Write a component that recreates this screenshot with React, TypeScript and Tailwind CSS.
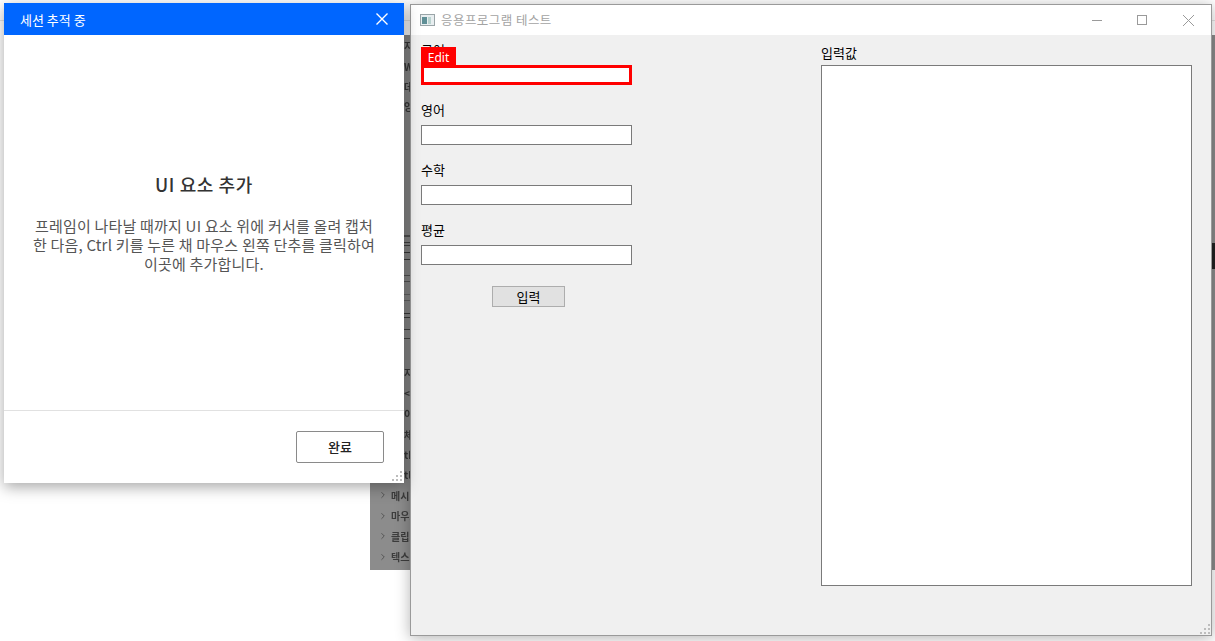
import React from 'react';
import { ChevronRight } from 'lucide-react';

const KR = 'font-["Noto_Sans_CJK_KR","Noto_Sans",sans-serif]';

// 뒤쪽 창의 트리 항목 (어둡게 가려진 부분)
const behindRows = ['메시지', '마우스', '클립보드', '텍스트'];

const behindStubs: [number, string][] = [
  [46, '지'],
  [67, 'W'],
  [87, '데'],
  [107, '앙'],
  [373, '지'],
  [393, '<'],
  [414, '이'],
  [435, '체'],
  [455, 'th'],
  [475, 'tle'],
];

// 가려진 아이콘 조각들: [top, height, 진하기]
const behindBars: [number, number, string][] = [
  [235, 1, 'border-[#555]'],
  [242, 4, 'border-[#444]'],
  [252, 8, 'border-[#3a3a3a]'],
  [275, 7, 'border-[#555]'],
  [294, 7, 'border-[#666]'],
  [313, 5, 'border-[#3a3a3a]'],
  [329, 10, 'border-[#444]'],
];

const Field = ({ label }: { label: string }) => (
  <div className="flex flex-col h-[60px]">
    <div className="h-[25px] pt-[1px] text-[13px] leading-[18px] text-black">{label}</div>
    <div className="w-[211px] h-[20px] bg-white border border-[#7a7a7a]" />
  </div>
);

const Grip = ({ className }: { className: string }) => (
  <svg className={className} width="12" height="12" viewBox="0 0 12 12" fill="#bdbdbd">
    <rect x="8" y="0" width="2" height="2" />
    <rect x="4" y="4" width="2" height="2" />
    <rect x="8" y="4" width="2" height="2" />
    <rect x="0" y="8" width="2" height="2" />
    <rect x="4" y="8" width="2" height="2" />
    <rect x="8" y="8" width="2" height="2" />
  </svg>
);

const TrackingDialog = () => (
  <div className={`absolute left-[4px] top-[3px] w-[400px] h-[480px] bg-white flex flex-col shadow-[0_4px_14px_rgba(0,0,0,0.35)] ${KR}`}>
    <div className="h-[32px] shrink-0 bg-[#0066ff] flex items-center justify-between pl-[16px] pr-[16px] text-white">
      <span className="text-[13px] leading-none">세션 추적 중</span>
      <svg width="12" height="12" viewBox="0 0 12 12" stroke="currentColor" strokeWidth="1.4" fill="none">
        <path d="M0.5 0.5l11 11M11.5 0.5l-11 11" />
      </svg>
    </div>
    <div className="flex-1 flex flex-col items-center pt-[135px] px-[20px] text-center">
      <h2 className="text-[18px] leading-[28px] font-medium tracking-[0.6px] text-[#333] whitespace-nowrap">UI 요소 추가</h2>
      <p className="mt-[18px] text-[15px] leading-[19px] tracking-[0.2px] text-[#555] whitespace-nowrap">
        프레임이 나타날 때까지 UI 요소 위에 커서를 올려 캡처
        <br />
        한 다음, Ctrl 키를 누른 채 마우스 왼쪽 단추를 클릭하여
        <br />
        이곳에 추가합니다.
      </p>
    </div>
    <div className="h-[73px] shrink-0 border-t border-[#e1e1e1] flex items-start justify-end pt-[20px] pr-[20px]">
      <button className="w-[88px] h-[32px] rounded-[2px] border border-[#8a8a8a] bg-white text-[13px] font-medium text-[#222]">
        완료
      </button>
    </div>
    <Grip className="absolute right-[0px] bottom-[0px]" />
  </div>
);

const TestWindow = () => (
  <div className={`absolute left-[410px] top-[4px] w-[802px] h-[632px] border border-[#9a9a9a] flex flex-col shadow-[0_2px_14px_rgba(0,0,0,0.3)] ${KR}`}>
    <div className="h-[30px] shrink-0 bg-white flex items-center pl-[9px] text-[#a3a3a3]">
      <svg width="15" height="12" viewBox="0 0 15 12" className="mr-[6px]">
        <rect x="0.5" y="0.5" width="14" height="11" fill="#e8eef0" stroke="#9aa5a8" />
        <rect x="2" y="3" width="5" height="7" fill="#5f8f96" />
        <rect x="8" y="3" width="3" height="7" fill="#b9d3cf" />
      </svg>
      <span className="text-[12.5px] leading-none tracking-[0.45px]">응용프로그램 테스트</span>
      <div className="ml-auto flex items-center h-full">
        <svg width="45" height="30" viewBox="0 0 45 30" stroke="#9a9a9a" fill="none">
          <path d="M16 15.5h10" />
        </svg>
        <svg width="45" height="30" viewBox="0 0 45 30" stroke="#9a9a9a" fill="none">
          <rect x="16.5" y="10.5" width="9" height="9" />
        </svg>
        <svg width="45" height="30" viewBox="0 0 45 30" stroke="#9a9a9a" fill="none">
          <path d="M17 10l11 11M28 10l-11 11" />
        </svg>
      </div>
    </div>
    <div className="relative flex-1 bg-[#f0f0f0] pl-[10px] pr-[19px] pt-[5px] flex justify-between">
      <div className="flex flex-col w-[211px]">
        <Field label="국어" />
        <Field label="영어" />
        <Field label="수학" />
        <Field label="평균" />
        <button className="self-start ml-[71px] mt-[6px] w-[73px] h-[21px] bg-[#e1e1e1] border border-[#adadad] text-[13px] leading-none text-black">
          입력
        </button>
      </div>
      <div className="flex flex-col w-[371px]">
        <div className="h-[25px] pt-[4px] text-[13px] leading-[18px] text-black">입력값</div>
        <div className="w-[371px] h-[521px] bg-white border border-[#7a7a7a]" />
      </div>
      <Grip className="absolute right-[-1px] bottom-[-1px]" />
      {/* 선택된 요소 표시 프레임 */}
      <div className="absolute left-[10px] top-[12px] w-[35px] h-[19px] bg-[#ff0000] text-white text-[12px] leading-[21px] text-center font-['Noto_Sans',sans-serif]">
        Edit
      </div>
      <div className="absolute left-[10px] top-[30px] w-[211px] h-[20px] border-[3px] border-[#ff0000]" />
    </div>
  </div>
);

const App: React.FC = () => {
  return (
    <div className={`relative w-[1215px] h-[641px] overflow-hidden bg-white ${KR}`}>
      {/* 뒤쪽 창 */}
      <div className="absolute left-0 top-[20px] w-full h-px bg-[#e4e4e4]" />
      <div className="absolute left-[370px] top-[35px] w-[845px] h-[535px] bg-[#8c8c8c]">
        <div className="absolute right-0 top-[208px] w-[4px] h-[26px] bg-[#222]" />
        {behindStubs.map(([top, text]) => (
          <span
            key={top}
            className="absolute left-[34px] text-[10px] leading-[12px] font-bold text-[#3a3a3a] blur-[0.5px]"
            style={{ top: top - 35 - 6 }}
          >
            {text}
          </span>
        ))}
        {behindBars.map(([top, height, color]) => (
          <div
            key={top}
            className={`absolute left-[34px] w-[7px] border-y blur-[0.4px] ${color}`}
            style={{ top: top - 35, height }}
          />
        ))}
        <div className="absolute left-[8px] top-[452px] flex flex-col gap-[4px]">
          {behindRows.map((row) => (
            <div key={row} className="h-[16.5px] flex items-center gap-[3px] whitespace-nowrap text-[10px] font-bold text-[#3d3d3d] blur-[0.4px]">
              <ChevronRight size={10} className="text-[#4a4a4a]" />
              <span>{row}</span>
            </div>
          ))}
        </div>
      </div>
      <TestWindow />
      <TrackingDialog />
    </div>
  );
};

export default App;
